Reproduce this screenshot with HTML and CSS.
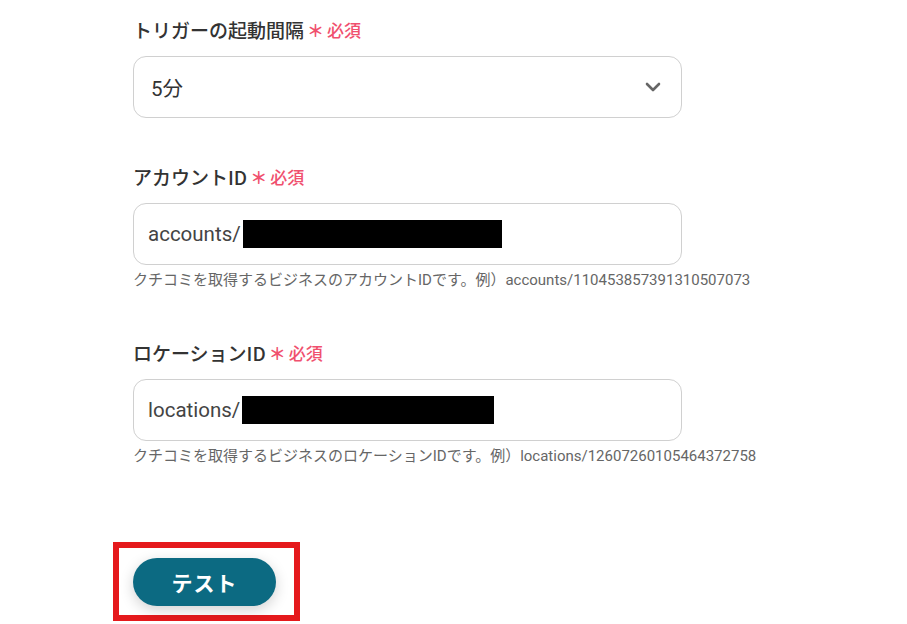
FILE: index.html
```html
<!DOCTYPE html>
<html lang="ja">
<head>
<meta charset="utf-8">
<link rel="stylesheet" href="styles.css">
</head>
<body>
<div class="form">
  <div class="field f1">
    <div class="label">トリガーの起動間隔<span class="req"><span class="star">＊</span>必須</span></div>
    <div class="box select">
      <span class="value">5分</span>
      <svg class="chev" width="16" height="10" viewBox="0 0 16 10"><path d="M2 2 L8 8 L14 2" fill="none" stroke="#666" stroke-width="2.6" stroke-linecap="round" stroke-linejoin="round"/></svg>
    </div>
  </div>
  <div class="field f2">
    <div class="label">アカウントID<span class="req"><span class="star">＊</span>必須</span></div>
    <div class="box">
      <span class="value">accounts/</span><span class="redact r1"></span>
    </div>
    <div class="help">クチコミを取得するビジネスのアカウントIDです。例）accounts/110453857391310507073</div>
  </div>
  <div class="field f3">
    <div class="label">ロケーションID<span class="req"><span class="star">＊</span>必須</span></div>
    <div class="box">
      <span class="value">locations/</span><span class="redact r2"></span>
    </div>
    <div class="help">クチコミを取得するビジネスのロケーションIDです。例）locations/12607260105464372758</div>
  </div>
  <div class="actions">
    <button class="btn">テスト</button>
  </div>
</div>
</body>
</html>
```
FILE: styles.css
```css
html, body {
  margin: 0;
  padding: 0;
  background: #fff;
}
body {
  font-family: Roboto, "Noto Sans CJK JP", sans-serif;
  color: #333;
}
.form {
  padding: 18px 0 0 133px;
  width: 550px;
}
.label {
  font-family: "Noto Sans CJK JP", sans-serif;
  font-size: 19px;
  font-weight: 500;
  line-height: 24px;
  color: #333;
  display: flex;
  align-items: center;
}
.req {
  color: #f0506e;
  font-size: 17px;
  font-weight: 500;
  margin-left: 3px;
  display: flex;
  align-items: center;
}
.star {
  font-size: 17px;
  font-weight: 700;
  margin-right: 3px;
}
.box {
  margin-top: 14px;
  height: 60px;
  border: 1px solid #d0d0d0;
  border-radius: 13px;
  display: flex;
  align-items: center;
  padding: 0 14px;
  box-sizing: content-box;
  width: 519px;
}
.value {
  font-size: 20.5px;
  color: #444;
}
.select .value {
  color: #333;
  padding-left: 3px;
}
.select {
  justify-content: space-between;
}
.chev {
  margin-right: 6px;
}
.redact {
  display: inline-block;
  height: 28px;
  background: #000;
  margin-left: 2px;
}
.r1 { width: 259px; }
.r2 { width: 252px; }
.help {
  margin-top: 6px;
  font-size: 15px;
  line-height: 18px;
  color: #666;
  white-space: nowrap;
}
.f1 { margin-bottom: 47px; }
.f2 { margin-bottom: 52px; }
.actions {
  display: inline-block;
  margin-top: 77px;
  margin-left: -20px;
  border: 6px solid #e5191c;
  padding: 10px 18px 9px 14px;
  line-height: 0;
}
.btn {
  display: block;
  width: 143px;
  height: 48px;
  border: none;
  border-radius: 24px;
  background: #0c6a82;
  color: #fff;
  font-family: "Noto Sans CJK JP", sans-serif;
  font-size: 21px;
  line-height: 48px;
  font-weight: 700;
  box-shadow: 0 4px 14px rgba(0, 0, 0, 0.18);
  padding: 0;
  letter-spacing: 1px;
}
```
